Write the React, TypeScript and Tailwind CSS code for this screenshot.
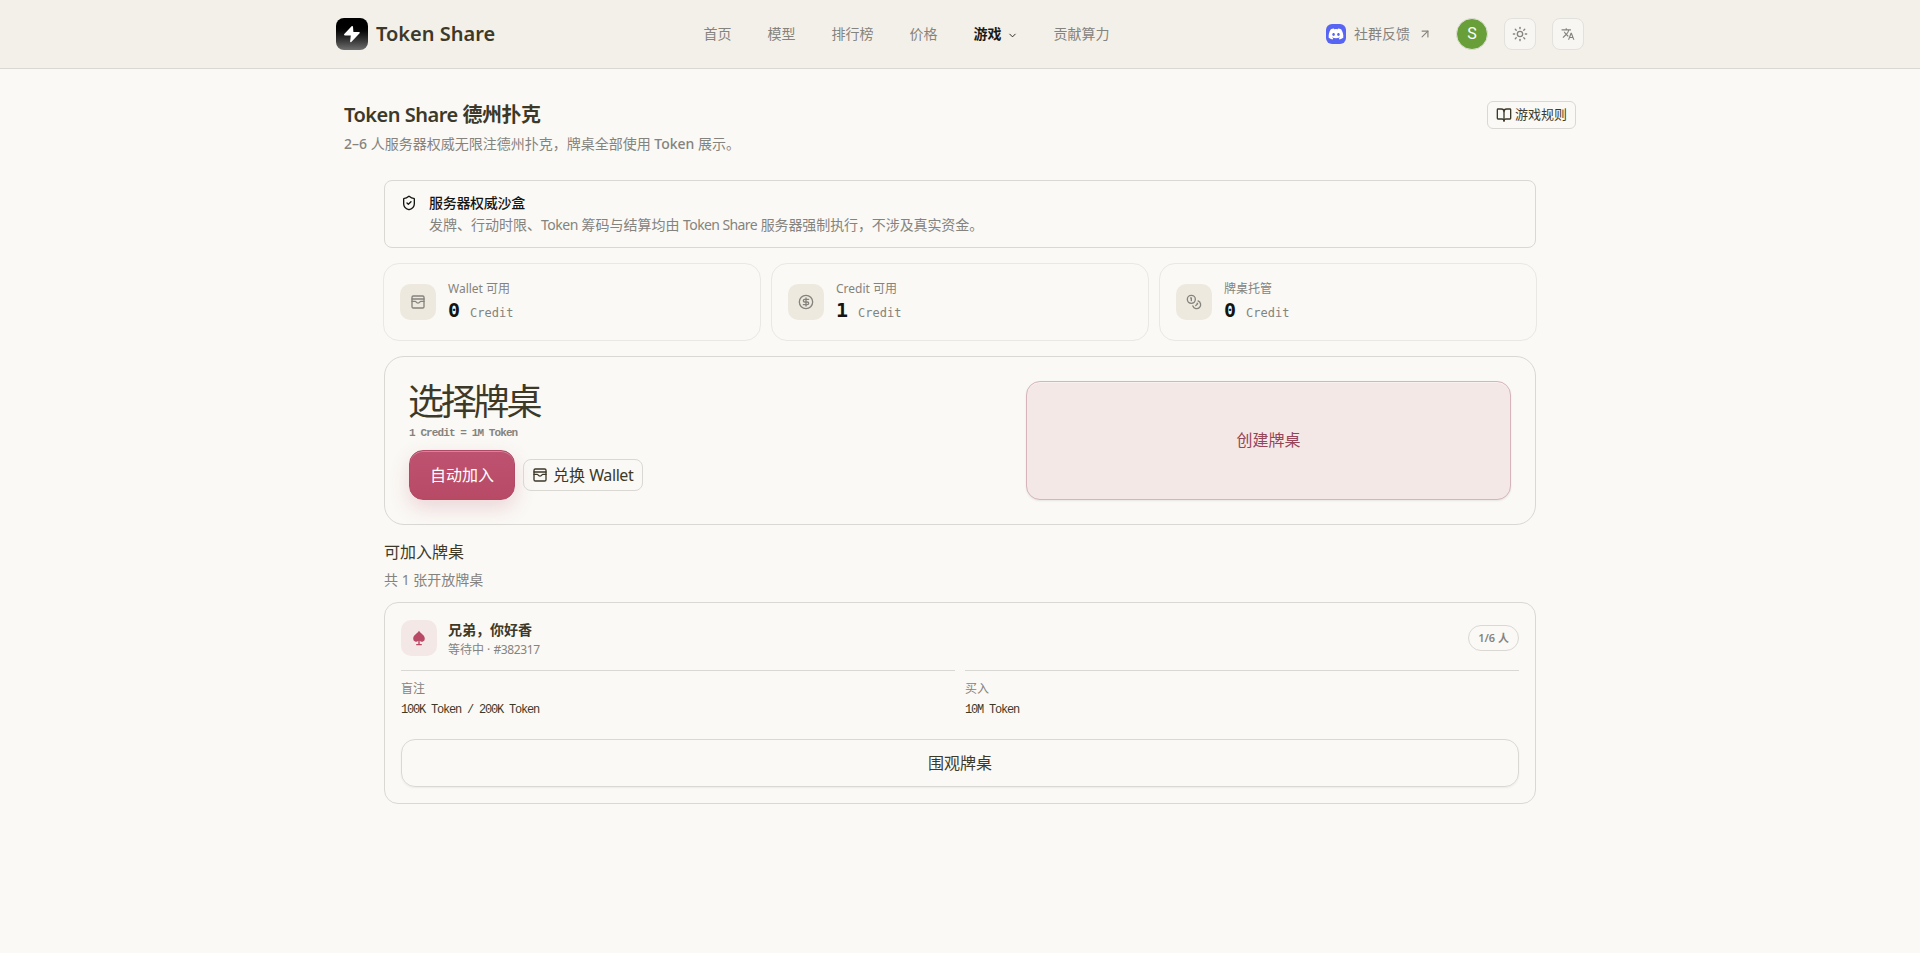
import {
  ArrowUpRight,
  BookOpen,
  ChevronDown,
  CircleDollarSign,
  Coins,
  ShieldCheck,
  Sun,
} from "lucide-react";
import type { ReactNode } from "react";
import { FaDiscord } from "react-icons/fa";
import { MdTranslate } from "react-icons/md";

const navItems = [
  { label: "首页" },
  { label: "模型" },
  { label: "排行榜" },
  { label: "价格" },
  { label: "游戏", active: true },
  { label: "贡献算力" },
];

function WalletIcon({ className }: { className?: string }) {
  return (
    <svg
      className={className}
      viewBox="0 0 24 24"
      fill="none"
      stroke="currentColor"
      strokeWidth={2}
      strokeLinecap="round"
      strokeLinejoin="round"
    >
      <rect x="3" y="3" width="18" height="18" rx="2" />
      <path d="M3 7.5h18" />
      <path d="M3 11h4.5c.8 0 1.300.3 1.700 1a3.200 3.200 0 0 0 5.600 0c.4-.7.9-1 1.700-1H21" />
    </svg>
  );
}

function SpadeIcon({ className }: { className?: string }) {
  return (
    <svg className={className} viewBox="0 0 16 16" fill="currentColor">
      <path d="M8 .8C6.300 3.500 2.200 5.300 2.200 8.700a2.900 2.900 0 0 0 5.100 2V14H5.200v1.200h5.600V14H8.700v-3.300a2.900 2.900 0 0 0 5.100-2C13.800 5.300 9.700 3.500 8 .8z" />
    </svg>
  );
}

function Header() {
  return (
    <header className="h-[69px] border-b border-[#d9d8d3] bg-[#f3f0e9]">
      <div className="mx-auto flex h-full w-[1248px] items-center">
        <div className="flex w-[367.5px] items-center gap-2">
          <div className="flex h-8 w-8 items-center justify-center rounded-lg bg-linear-to-b from-black from-20% to-[#707070]">
            <svg className="h-5 w-5" viewBox="0 0 20 20" fill="white">
              <path d="M9.600 2.200 2.300 10.100c-.5.6-.2 1.400.6 1.400h5.900l-.7 6c0 .7.700 1 1.200.5l8.300-8.700c.5-.6.2-1.400-.6-1.400h-5.600l-.4-5.200c-.1-.8-.9-1-1.400-.5z" />
            </svg>
          </div>
          <span className="text-xl font-semibold">Token Share</span>
        </div>

        <nav className="flex items-center gap-9 text-sm text-[#85837e]">
          {navItems.map((item) =>
            item.active ? (
              <span
                key={item.label}
                className="flex items-center gap-1 font-bold text-[#1b1a16]"
              >
                {item.label}
                <ChevronDown className="mt-0.5 ml-px h-[11px] w-[11px]" />
              </span>
            ) : (
              <span key={item.label}>{item.label}</span>
            )
          )}
        </nav>

        <div className="ml-auto flex items-center gap-4">
          <div className="mr-2 flex items-center gap-2 text-sm text-[#85837e]">
            <span className="flex h-5 w-5 items-center justify-center rounded-md bg-[#5865f2] text-white">
              <FaDiscord className="h-4 w-4" />
            </span>
            社群反馈
            <ArrowUpRight className="h-3.5 w-3.5" />
          </div>
          <div className="flex h-8 w-8 items-center justify-center rounded-full border border-[#e2e0da] bg-[#689f38] font-[Roboto] text-base text-white">
            S
          </div>
          <button className="flex h-8 w-8 items-center justify-center rounded-lg border border-[#e2e1dc] bg-[#f8f6f2] text-[#85837e]">
            <Sun className="h-4 w-4" />
          </button>
          <button className="flex h-8 w-8 items-center justify-center rounded-lg border border-[#e2e1dc] bg-[#f8f6f2] text-[#85837e]">
            <MdTranslate className="h-3.5 w-3.5" />
          </button>
        </div>
      </div>
    </header>
  );
}

function StatCard({
  icon,
  label,
  value,
}: {
  icon: ReactNode;
  label: string;
  value: string;
}) {
  return (
    <div className="flex h-[78px] items-center gap-3 rounded-2xl border border-[#e9e8e4] px-4">
      <div className="flex h-9 w-9 items-center justify-center rounded-[10px] bg-[#ede9de] text-[#85837e]">
        {icon}
      </div>
      <div>
        <div className="text-xs leading-4 text-[#85837e]">{label}</div>
        <div className="mt-px mb-px flex items-baseline gap-2.5 font-['DejaVu_Sans_Mono',monospace]">
          <span className="text-xl leading-6 font-bold text-[#141413]">
            {value}
          </span>
          <span className="text-xs text-[#85837e]">Credit</span>
        </div>
      </div>
    </div>
  );
}

function Detail({ label, value }: { label: string; value: string }) {
  return (
    <div className="border-t border-[#d9d8d3] pt-2.5">
      <div className="text-xs leading-4 text-[#85837e]">{label}</div>
      <div className="mt-[5px] font-['Liberation_Mono',monospace] text-xs leading-4 tracking-[-1.2px]">
        {value}
      </div>
    </div>
  );
}

export default function App() {
  return (
    <div className="min-h-screen bg-[#faf9f5] font-['Noto_Sans','Noto_Sans_CJK_SC',sans-serif] text-[#3d3929]">
      <Header />

      <main className="mx-auto w-[1232px] pt-8">
        <div className="flex h-[52px] items-start justify-between">
          <div>
            <h1 className="text-xl leading-7 font-semibold tracking-tight">
              Token Share 德州扑克
            </h1>
            <p className="mt-[5px] text-sm leading-5 text-[#85837e]">
              <span className="font-medium">2–6</span>{" "}
              人服务器权威无限注德州扑克，牌桌全部使用{" "}
              <span className="font-medium">Token</span> 展示。
            </p>
          </div>
          <button className="flex h-7 w-[89px] items-center gap-[3px] rounded-md border border-[#d9d8d3] px-2 text-[13px] whitespace-nowrap">
            <BookOpen className="h-4 w-4 shrink-0" />
            游戏规则
          </button>
        </div>

        <div className="mx-auto mt-[27px] w-[1152px]">
          <div className="flex h-[68px] gap-3 rounded-lg border border-[#d9d8d3] px-4 pt-[11px] text-sm">
            <ShieldCheck className="mt-[3px] h-4 w-4 text-[#141413]" />
            <div>
              <div className="pt-px leading-5 font-medium tracking-[-0.3px] text-[#141413]">
                服务器权威沙盒
              </div>
              <div className="mt-0.5 leading-5 text-[#85837e]">
                发牌、行动时限、
                <span className="tracking-[-0.5px]">Token</span>{" "}
                筹码与结算均由{" "}
                <span className="tracking-[-0.6px]">Token Share</span>{" "}
                <span className="tracking-[-0.1px]">
                  服务器强制执行，不涉及真实资金。
                </span>
              </div>
            </div>
          </div>

          <div className="-mx-px mt-[15px] grid grid-cols-3 gap-2.5">
            <StatCard
              icon={<WalletIcon className="h-4 w-4" />}
              label="Wallet 可用"
              value="0"
            />
            <StatCard
              icon={<CircleDollarSign className="h-4 w-4" />}
              label="Credit 可用"
              value="1"
            />
            <StatCard
              icon={<Coins className="h-4 w-4" />}
              label="牌桌托管"
              value="0"
            />
          </div>

          <section className="mt-[15px] flex h-[169px] justify-between rounded-[20px] border border-[#d9d8d3] p-6">
            <div>
              <h2 className="-ml-px pt-px text-4xl leading-10 tracking-[-3.2px]">
                选择牌桌
              </h2>
              <p className="mt-[3px] font-['Liberation_Mono',monospace] text-[11px] leading-4 font-bold tracking-[-0.9px] text-[#85837e]">
                1 Credit = 1M Token
              </p>
              <div className="mt-[9px] flex items-center gap-2">
                <button className="h-[50px] w-[106px] rounded-[14px] border border-[#b04a66] bg-linear-to-b from-[#bd5270] to-[#b84a66] text-base text-white shadow-[0_8px_20px_rgba(184,74,102,0.2),inset_0_1px_0_rgba(255,255,255,0.3)]">
                  自动加入
                </button>
                <button className="flex h-8 w-[120px] items-center gap-[5px] rounded-lg border border-[#d9d8d3] px-2 text-base whitespace-nowrap">
                  <WalletIcon className="h-4 w-4 shrink-0" />
                  <span>
                    兑换 <span className="tracking-[-0.4px]">Wallet</span>
                  </span>
                </button>
              </div>
            </div>
            <button className="w-[485px] rounded-[14px] border border-[#d5b5bb] bg-[#f4e8e7] pb-0.5 text-base text-[#964458] shadow-[0_1px_2px_rgba(0,0,0,0.08),inset_0_1px_0_rgba(255,255,255,0.4)]">
              创建牌桌
            </button>
          </section>

          <h3 className="mt-[15px] text-base leading-6">可加入牌桌</h3>
          <p className="mt-1.5 text-sm leading-5 text-[#85837e]">
            共 1 张开放牌桌
          </p>

          <section className="mt-3 h-[202px] rounded-[14px] border border-[#d9d8d3] px-4 pt-[17px]">
            <div className="flex h-9 items-center gap-[11px]">
              <div className="flex h-9 w-9 items-center justify-center rounded-[10px] bg-[#f4e8e7] text-[#b84a66]">
                <SpadeIcon className="h-4 w-4" />
              </div>
              <div className="pt-[3px]">
                <div className="text-sm leading-5 font-bold">
                  兄弟，你好香
                </div>
                <div className="text-xs leading-[19px] text-[#85837e]">
                  等待中 · <span className="tracking-[-0.4px]">#382317</span>
                </div>
              </div>
              <span className="ml-auto flex h-[26px] items-center rounded-full border border-[#d9d8d3] px-[9px] text-[11px] font-semibold text-[#85837e]">
                1/6 人
              </span>
            </div>
            <div className="mt-3.5 grid grid-cols-2 gap-2.5">
              <Detail label="盲注" value="100K Token / 200K Token" />
              <Detail label="买入" value="10M Token" />
            </div>
            <button className="mt-[21px] h-12 w-full rounded-[14px] border border-[#d9d8d3] text-base shadow-[0_1px_2px_rgba(0,0,0,0.06)]">
              围观牌桌
            </button>
          </section>
        </div>
      </main>
    </div>
  );
}
